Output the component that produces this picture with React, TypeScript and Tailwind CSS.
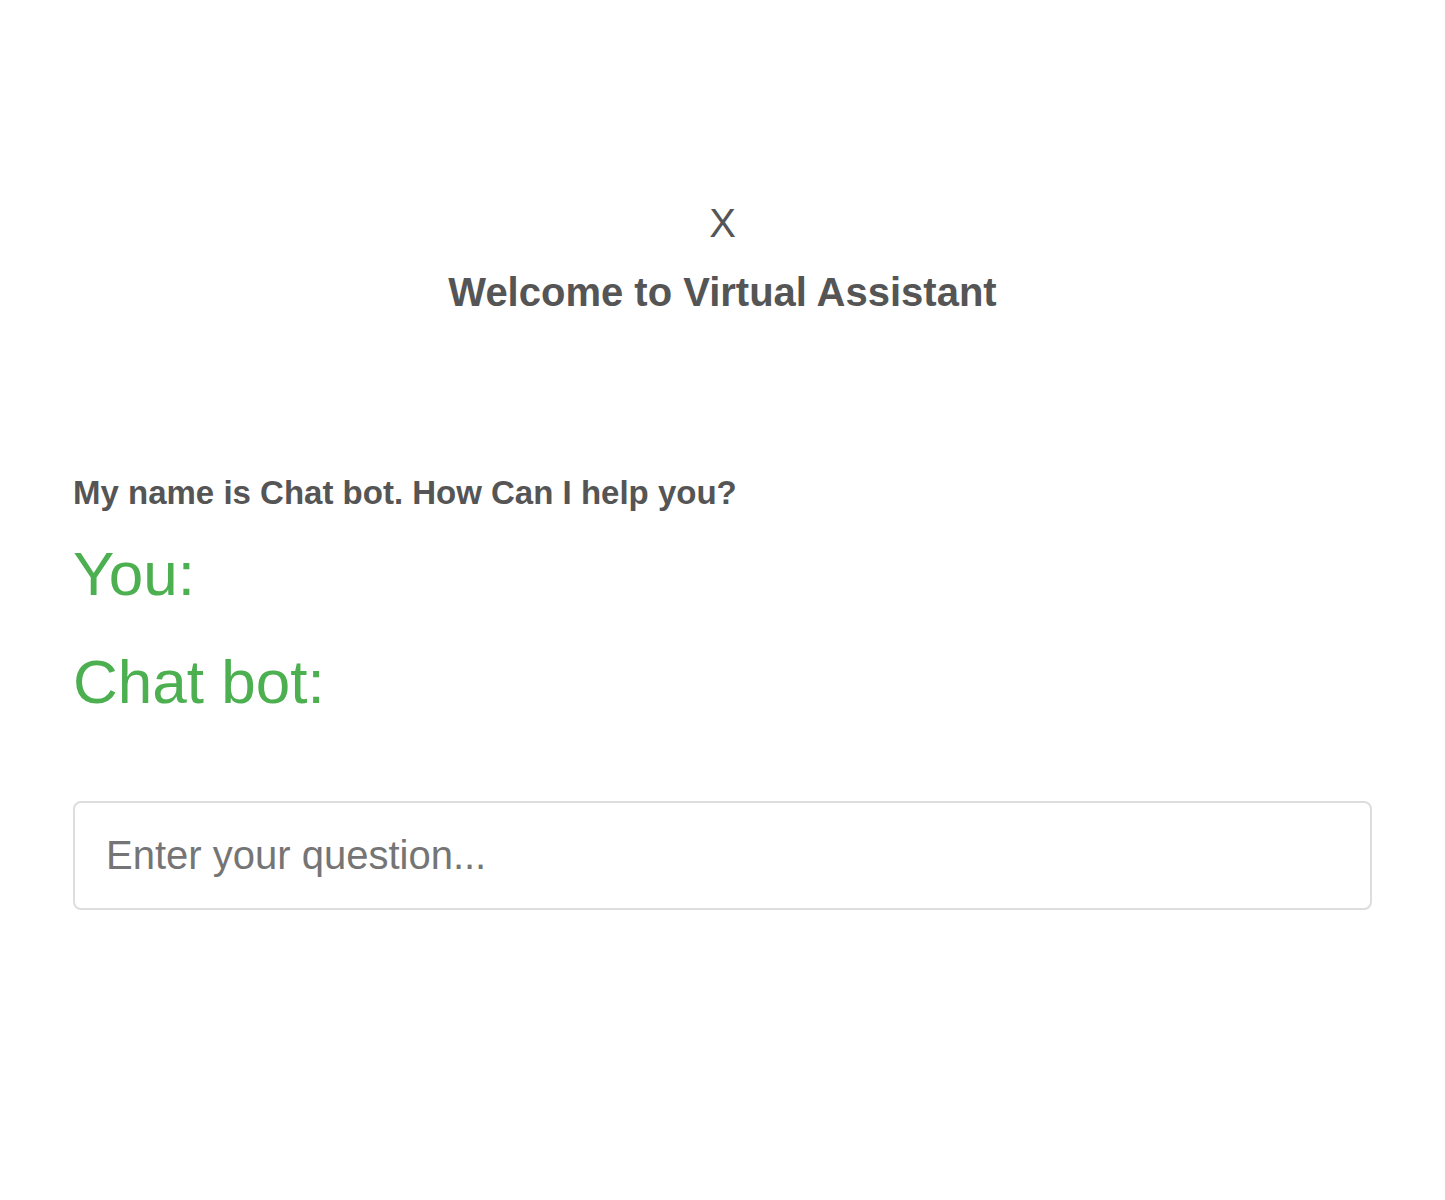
export default function App() {
  return (
    <div className="min-h-[1200px] bg-white px-[73px] pt-[203px] font-['Liberation_Sans',Arial,sans-serif] text-[#555555]">
      <div className="flex flex-col items-center">
        <button className="text-[40px] leading-[40px] font-normal text-[#555555]">X</button>
        <h1 className="mt-[29px] text-[40px] leading-[40px] font-bold">Welcome to Virtual Assistant</h1>
      </div>

      <p className="mt-[164px] text-[33px] leading-[33px] font-bold">My name is Chat bot. How Can I help you?</p>

      <div className="mt-[33px] text-[62px] leading-[64px] text-[#4caf50]">You:</div>
      <div className="mt-[44px] text-[62px] leading-[64px] text-[#4caf50]">Chat bot:</div>

      <input
        type="text"
        placeholder="Enter your question..."
        className="mt-[87px] block h-[109px] w-full rounded-[8px] border-2 border-[#dddddd] bg-white px-[31px] text-[40px] text-[#555555] outline-none placeholder:text-[#757575]"
      />
    </div>
  );
}
